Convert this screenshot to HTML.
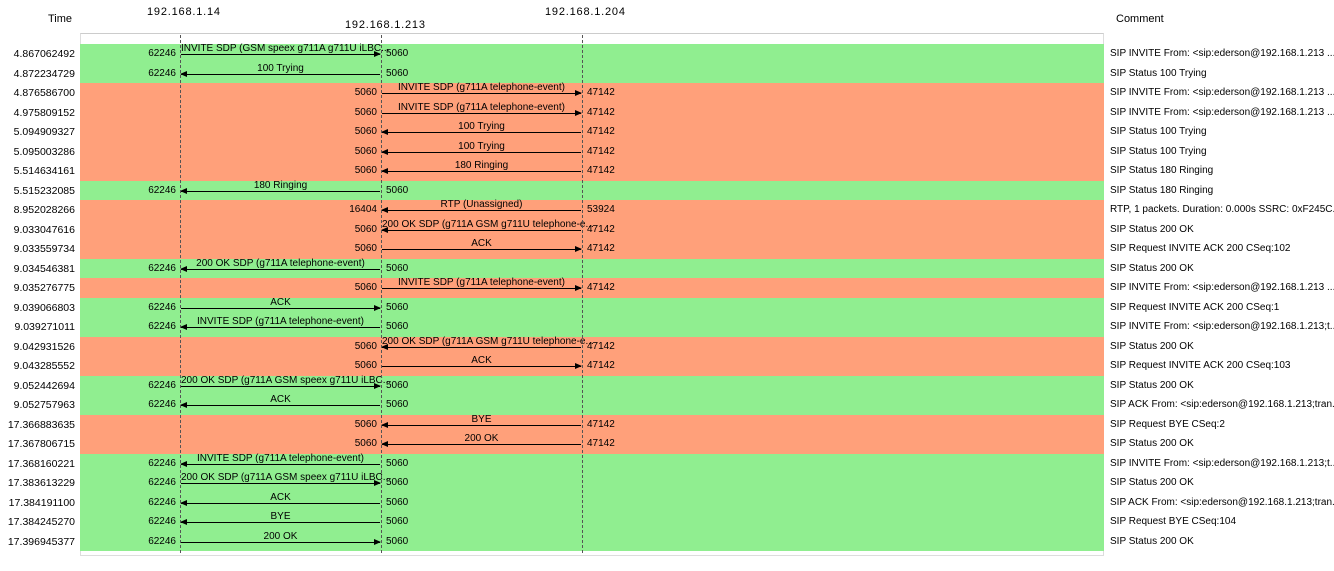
<!DOCTYPE html><html><head><meta charset="utf-8"><style>
body{margin:0;width:1334px;height:571px;background:#fff;position:relative;overflow:hidden;font-family:"Liberation Sans",sans-serif;font-size:10px;color:#000}
.h{position:absolute;font-size:11px}
.ip{letter-spacing:0.8px}
.panel{position:absolute;left:80px;top:33px;width:1024px;height:523px;border:1px solid #ddd;border-top:1px solid #ccc;box-sizing:border-box}
.r{position:absolute;left:0;width:1334px;height:19.5px}
.g::before,.o::before{content:"";position:absolute;left:80px;width:1024px;top:0;bottom:0}
.g::before{background:#90ee90}.o::before{background:#ffa07a}
.r span{position:absolute;top:4px;white-space:nowrap;line-height:12px}
.t{right:1259px;font-size:10.5px}
.c{left:1110px}
.pl1{right:1158px}.pr1{left:386px}.pl2{right:957px}.pr2{left:587px}
.ln{position:absolute;top:10px;height:1px;background:#000}
.a1{left:181px;width:199px}.a2{left:382px;width:199px}
.R::after{content:"";position:absolute;right:-1px;top:-3px;border-left:7px solid #000;border-top:3.5px solid transparent;border-bottom:3.5px solid transparent}
.L::after{content:"";position:absolute;left:-1px;top:-3px;border-right:7px solid #000;border-top:3.5px solid transparent;border-bottom:3.5px solid transparent}
.r span.lb{top:-1px;text-align:center}
.v{position:absolute;top:35px;height:518px;width:0;border-left:1px dashed #555;z-index:5}
</style></head><body>
<div class="h" style="left:48px;top:13px">Time</div>
<div class="h ip" style="left:147px;top:6px">192.168.1.14</div>
<div class="h ip" style="left:345px;top:19px">192.168.1.213</div>
<div class="h ip" style="left:545px;top:6px">192.168.1.204</div>
<div class="h" style="left:1116px;top:13px">Comment</div>
<div class="panel"></div>
<div class="v" style="left:180px"></div><div class="v" style="left:381px"></div><div class="v" style="left:582px"></div>

<div class="r g" style="top:44px"><span class="t">4.867062492</span><span class="pl1">62246</span><span class="pr1">5060</span><div class="ln a1 R"></div><span class="lb a1">INVITE SDP (GSM speex g711A g711U iLBC...</span><span class="c">SIP INVITE From: &lt;sip:ederson@192.168.1.213 ...</span></div>
<div class="r g" style="top:63.5px"><span class="t">4.872234729</span><span class="pl1">62246</span><span class="pr1">5060</span><div class="ln a1 L"></div><span class="lb a1">100 Trying</span><span class="c">SIP Status 100 Trying</span></div>
<div class="r o" style="top:83px"><span class="t">4.876586700</span><span class="pl2">5060</span><span class="pr2">47142</span><div class="ln a2 R"></div><span class="lb a2">INVITE SDP (g711A telephone-event)</span><span class="c">SIP INVITE From: &lt;sip:ederson@192.168.1.213 ...</span></div>
<div class="r o" style="top:102.5px"><span class="t">4.975809152</span><span class="pl2">5060</span><span class="pr2">47142</span><div class="ln a2 R"></div><span class="lb a2">INVITE SDP (g711A telephone-event)</span><span class="c">SIP INVITE From: &lt;sip:ederson@192.168.1.213 ...</span></div>
<div class="r o" style="top:122px"><span class="t">5.094909327</span><span class="pl2">5060</span><span class="pr2">47142</span><div class="ln a2 L"></div><span class="lb a2">100 Trying</span><span class="c">SIP Status 100 Trying</span></div>
<div class="r o" style="top:141.5px"><span class="t">5.095003286</span><span class="pl2">5060</span><span class="pr2">47142</span><div class="ln a2 L"></div><span class="lb a2">100 Trying</span><span class="c">SIP Status 100 Trying</span></div>
<div class="r o" style="top:161px"><span class="t">5.514634161</span><span class="pl2">5060</span><span class="pr2">47142</span><div class="ln a2 L"></div><span class="lb a2">180 Ringing</span><span class="c">SIP Status 180 Ringing</span></div>
<div class="r g" style="top:180.5px"><span class="t">5.515232085</span><span class="pl1">62246</span><span class="pr1">5060</span><div class="ln a1 L"></div><span class="lb a1">180 Ringing</span><span class="c">SIP Status 180 Ringing</span></div>
<div class="r o" style="top:200px"><span class="t">8.952028266</span><span class="pl2">16404</span><span class="pr2">53924</span><div class="ln a2 L"></div><span class="lb a2">RTP (Unassigned)</span><span class="c">RTP, 1 packets. Duration: 0.000s SSRC: 0xF245C...</span></div>
<div class="r o" style="top:219.5px"><span class="t">9.033047616</span><span class="pl2">5060</span><span class="pr2">47142</span><div class="ln a2 L"></div><span class="lb a2">200 OK SDP (g711A GSM g711U telephone-e...</span><span class="c">SIP Status 200 OK</span></div>
<div class="r o" style="top:239px"><span class="t">9.033559734</span><span class="pl2">5060</span><span class="pr2">47142</span><div class="ln a2 R"></div><span class="lb a2">ACK</span><span class="c">SIP Request INVITE ACK 200 CSeq:102</span></div>
<div class="r g" style="top:258.5px"><span class="t">9.034546381</span><span class="pl1">62246</span><span class="pr1">5060</span><div class="ln a1 L"></div><span class="lb a1">200 OK SDP (g711A telephone-event)</span><span class="c">SIP Status 200 OK</span></div>
<div class="r o" style="top:278px"><span class="t">9.035276775</span><span class="pl2">5060</span><span class="pr2">47142</span><div class="ln a2 R"></div><span class="lb a2">INVITE SDP (g711A telephone-event)</span><span class="c">SIP INVITE From: &lt;sip:ederson@192.168.1.213 ...</span></div>
<div class="r g" style="top:297.5px"><span class="t">9.039066803</span><span class="pl1">62246</span><span class="pr1">5060</span><div class="ln a1 R"></div><span class="lb a1">ACK</span><span class="c">SIP Request INVITE ACK 200 CSeq:1</span></div>
<div class="r g" style="top:317px"><span class="t">9.039271011</span><span class="pl1">62246</span><span class="pr1">5060</span><div class="ln a1 L"></div><span class="lb a1">INVITE SDP (g711A telephone-event)</span><span class="c">SIP INVITE From: &lt;sip:ederson@192.168.1.213;t...</span></div>
<div class="r o" style="top:336.5px"><span class="t">9.042931526</span><span class="pl2">5060</span><span class="pr2">47142</span><div class="ln a2 L"></div><span class="lb a2">200 OK SDP (g711A GSM g711U telephone-e...</span><span class="c">SIP Status 200 OK</span></div>
<div class="r o" style="top:356px"><span class="t">9.043285552</span><span class="pl2">5060</span><span class="pr2">47142</span><div class="ln a2 R"></div><span class="lb a2">ACK</span><span class="c">SIP Request INVITE ACK 200 CSeq:103</span></div>
<div class="r g" style="top:375.5px"><span class="t">9.052442694</span><span class="pl1">62246</span><span class="pr1">5060</span><div class="ln a1 R"></div><span class="lb a1">200 OK SDP (g711A GSM speex g711U iLBC...</span><span class="c">SIP Status 200 OK</span></div>
<div class="r g" style="top:395px"><span class="t">9.052757963</span><span class="pl1">62246</span><span class="pr1">5060</span><div class="ln a1 L"></div><span class="lb a1">ACK</span><span class="c">SIP ACK From: &lt;sip:ederson@192.168.1.213;tran...</span></div>
<div class="r o" style="top:414.5px"><span class="t">17.366883635</span><span class="pl2">5060</span><span class="pr2">47142</span><div class="ln a2 L"></div><span class="lb a2">BYE</span><span class="c">SIP Request BYE CSeq:2</span></div>
<div class="r o" style="top:434px"><span class="t">17.367806715</span><span class="pl2">5060</span><span class="pr2">47142</span><div class="ln a2 L"></div><span class="lb a2">200 OK</span><span class="c">SIP Status 200 OK</span></div>
<div class="r g" style="top:453.5px"><span class="t">17.368160221</span><span class="pl1">62246</span><span class="pr1">5060</span><div class="ln a1 L"></div><span class="lb a1">INVITE SDP (g711A telephone-event)</span><span class="c">SIP INVITE From: &lt;sip:ederson@192.168.1.213;t...</span></div>
<div class="r g" style="top:473px"><span class="t">17.383613229</span><span class="pl1">62246</span><span class="pr1">5060</span><div class="ln a1 R"></div><span class="lb a1">200 OK SDP (g711A GSM speex g711U iLBC...</span><span class="c">SIP Status 200 OK</span></div>
<div class="r g" style="top:492.5px"><span class="t">17.384191100</span><span class="pl1">62246</span><span class="pr1">5060</span><div class="ln a1 L"></div><span class="lb a1">ACK</span><span class="c">SIP ACK From: &lt;sip:ederson@192.168.1.213;tran...</span></div>
<div class="r g" style="top:512px"><span class="t">17.384245270</span><span class="pl1">62246</span><span class="pr1">5060</span><div class="ln a1 L"></div><span class="lb a1">BYE</span><span class="c">SIP Request BYE CSeq:104</span></div>
<div class="r g" style="top:531.5px"><span class="t">17.396945377</span><span class="pl1">62246</span><span class="pr1">5060</span><div class="ln a1 R"></div><span class="lb a1">200 OK</span><span class="c">SIP Status 200 OK</span></div>
</body></html>
